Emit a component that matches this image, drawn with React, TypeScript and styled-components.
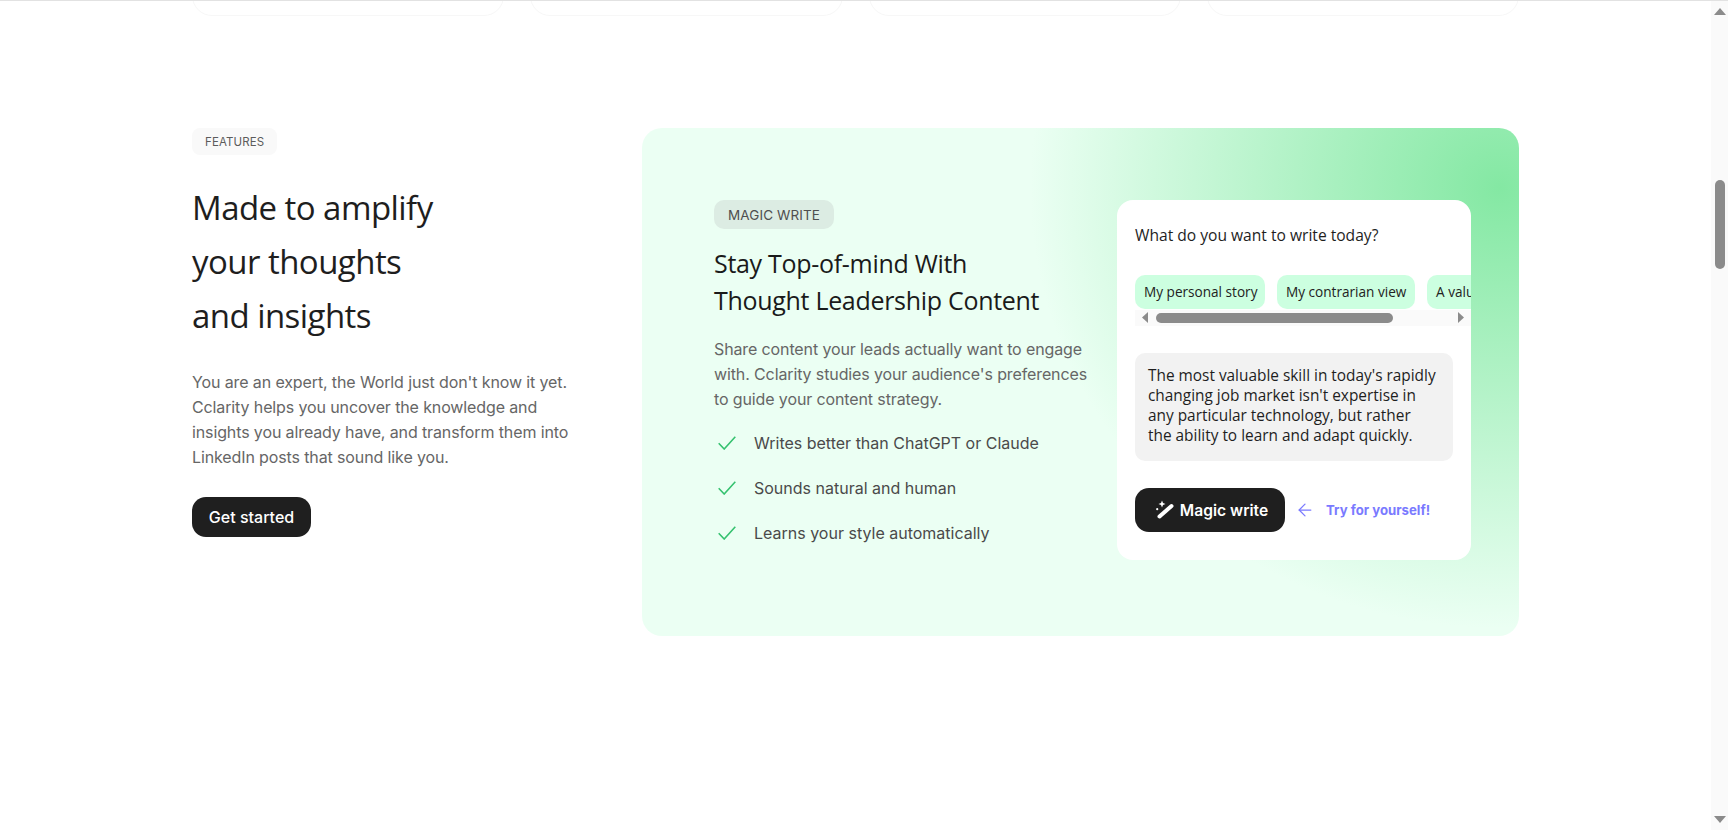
import React from "react";
import styled, { createGlobalStyle } from "styled-components";
import { ArrowLeft } from "lucide-react";

const GlobalStyle = createGlobalStyle`
  html, body {
    margin: 0;
    padding: 0;
    height: 100%;
    overflow: hidden;
    background: #fff;
  }
  * { box-sizing: border-box; }
`;

const Page = styled.div`
  height: 830px;
  display: flex;
  flex-direction: column;
  border-top: 1px solid #e2e2e2;
  font-family: Inter, "Liberation Sans", sans-serif;
`;

const Row = styled.div`
  flex: 1;
  display: flex;
  min-height: 0;
`;

const Main = styled.main`
  flex: 1;
  padding: 0 192px 0 192px;
`;

const StubRow = styled.div`
  display: grid;
  grid-template-columns: repeat(4, 1fr);
  gap: 26px;
  height: 15px;
  overflow: hidden;
`;

// cards of the section above, only their bottom edge is still on screen
const Stub = styled.div`
  height: 40px;
  margin-top: -25px;
  border: 1px solid #f7f7f7;
  border-radius: 24px;
`;

const Section = styled.section`
  display: flex;
  margin-top: 112px;
`;

const Intro = styled.div`
  width: 450px;
  flex-shrink: 0;
`;

const Tag = styled.span`
  display: inline-block;
  height: 27px;
  line-height: 28px;
  padding: 0 13px;
  border-radius: 8px;
  background: #f9f9f9;
  color: #5c5c5c;
  font-size: 11.5px;
  letter-spacing: 0.1px;
`;

const Title = styled.h2`
  margin: 26px 0 0;
  font-family: "Open Sans", sans-serif;
  font-size: 33px;
  font-weight: 400;
  line-height: 54px;
  letter-spacing: -0.55px;
  color: #1e1e1e;
`;

const IntroText = styled.p`
  margin: 27px 0 0;
  width: 390px;
  font-size: 16px;
  line-height: 25px;
  letter-spacing: -0.12px;
  color: #666;
`;

const StartButton = styled.button`
  display: block;
  margin-top: 27px;
  width: 119px;
  height: 40px;
  border: none;
  border-radius: 14px;
  background: #1f1f1f;
  color: #fff;
  font-family: inherit;
  font-size: 16px;
  font-weight: 500;
`;

const FeatureCard = styled.div`
  flex: 1;
  height: 508px;
  display: flex;
  padding: 72px 48px 0 72px;
  border-radius: 20px;
  background: radial-gradient(ellipse 470px 440px at 858px 60px, #84e8a3 0%, #ebfff3 100%);
`;

const FeatureCopy = styled.div`
  width: 403px;
  flex-shrink: 0;
`;

const FeatureTag = styled.span`
  display: inline-block;
  height: 29px;
  line-height: 30px;
  padding: 0 14px;
  border-radius: 10px;
  background: #dcece3;
  color: #4f4f4f;
  font-size: 13.5px;
  letter-spacing: 0.1px;
`;

const FeatureTitle = styled.h3`
  margin: 16px 0 0;
  font-family: "Open Sans", sans-serif;
  font-size: 25px;
  font-weight: 400;
  line-height: 36.5px;
  letter-spacing: -0.3px;
  color: #1a1a1a;
`;

const FeatureText = styled.p`
  margin: 19px 0 0;
  width: 385px;
  font-size: 16px;
  line-height: 25px;
  letter-spacing: -0.12px;
  color: #666;
`;

const Checks = styled.ul`
  list-style: none;
  margin: 18px 0 0;
  padding: 0;
  display: flex;
  flex-direction: column;
  gap: 20px;
`;

const CheckItem = styled.li`
  display: flex;
  align-items: center;
  gap: 18px;
  height: 25px;
  padding-left: 4px;
  font-size: 16px;
  color: #4a4a4a;
`;

const Panel = styled.div`
  width: 354px;
  height: 360px;
  padding: 23px 0 0 18px;
  border-radius: 16px;
  background: #fff;
`;

const PanelTitle = styled.div`
  font-family: "Open Sans", sans-serif;
  font-size: 15.6px;
  line-height: 24px;
  color: #1e1e1e;
`;

const ChipScroller = styled.div`
  margin-top: 27.5px;
  overflow: hidden;
`;

const Chips = styled.div`
  display: flex;
  gap: 12px;
  width: max-content;
`;

const Chip = styled.span<{ $w: number }>`
  width: ${(p) => p.$w}px;
  height: 34px;
  line-height: 33px;
  padding-left: 9px;
  border-radius: 10px;
  background: #ccffe0;
  color: #222;
  font-family: "Open Sans", sans-serif;
  font-size: 13.6px;
  white-space: nowrap;
`;

const MiniRail = styled.div`
  height: 16px;
  margin-top: 1px;
  display: flex;
  align-items: center;
  justify-content: space-between;
  padding: 0 7px 0 7px;
  background: #fafafa;
`;

const MiniThumb = styled.div`
  width: 237px;
  height: 10px;
  margin-right: 58px;
  border-radius: 5px;
  background: #8b8b8b;
`;

const Draft = styled.div`
  width: 318px;
  height: 108px;
  margin-top: 27.5px;
  padding: 12.5px 0 0 13px;
  border-radius: 10px;
  background: #f2f2f2;
  font-family: "Open Sans", sans-serif;
  font-size: 15.4px;
  line-height: 20.3px;
  white-space: nowrap;
  color: #1e1e1e;
`;

const Actions = styled.div`
  display: flex;
  align-items: center;
  margin-top: 27px;
`;

const MagicButton = styled.button`
  display: flex;
  align-items: center;
  justify-content: center;
  gap: 5px;
  width: 150px;
  height: 44px;
  padding: 0 0 0 3px;
  border: none;
  border-radius: 14px;
  background: #1f1f1f;
  color: #fff;
  font-family: inherit;
  font-size: 15.6px;
  font-weight: 600;
`;

const TryHint = styled.div`
  display: flex;
  align-items: center;
  gap: 11px;
  margin-left: 10px;
  color: #7a7aff;
  font-size: 13.2px;
  font-weight: 700;
`;

const ScrollRail = styled.aside`
  width: 17px;
  flex-shrink: 0;
  display: flex;
  flex-direction: column;
  align-items: center;
  padding-top: 7px;
  background: #fafafa;
`;

const RailThumb = styled.div`
  width: 10px;
  height: 89px;
  margin-top: 165px;
  border-radius: 5px;
  background: #8b8b8b;
`;

const RailEnd = styled.div`
  margin-top: auto;
  margin-bottom: 7px;
  display: flex;
`;

const Triangle: React.FC<{ dir: "up" | "down" | "left" | "right"; w: number; h: number }> = ({ dir, w, h }) => {
  const points = {
    up: `0,${h} ${w},${h} ${w / 2},0`,
    down: `0,0 ${w},0 ${w / 2},${h}`,
    left: `${w},0 ${w},${h} 0,${h / 2}`,
    right: `0,0 0,${h} ${w},${h / 2}`,
  }[dir];
  return (
    <svg width={w} height={h} viewBox={`0 0 ${w} ${h}`}>
      <polygon points={points} fill="#8b8b8b" />
    </svg>
  );
};

const CheckMark = () => (
  <svg width="18" height="14" viewBox="0 0 18 14" fill="none">
    <path d="M0.7 7.2 L6.2 13 L17.3 0.8" stroke="#35c26f" strokeWidth="1.6" />
  </svg>
);

const WandIcon = () => (
  <svg width="20" height="20" viewBox="0 0 20 20" fill="#fff">
    <path d="M4.5 16.5 L16.5 6" stroke="#fff" strokeWidth="4" strokeLinecap="round" />
    <path d="M7 0.5 L8 3 L10.5 4 L8 5 L7 7.5 L6 5 L3.5 4 L6 3 Z" />
    <circle cx="2.2" cy="9.2" r="1.1" />
  </svg>
);

const checks = ["Writes better than ChatGPT or Claude", "Sounds natural and human", "Learns your style automatically"];

const App: React.FC = () => {
  return (
    <Page>
      <GlobalStyle />
      <Row>
        <Main>
          <StubRow>
            <Stub />
            <Stub />
            <Stub />
            <Stub />
          </StubRow>
          <Section>
            <Intro>
              <Tag>FEATURES</Tag>
              <Title>
                Made to amplify
                <br />
                your thoughts
                <br />
                and insights
              </Title>
              <IntroText>
                You are an expert, the World just don't know it yet. Cclarity helps you uncover the knowledge and
                insights you already have, and transform them into LinkedIn posts that sound like you.
              </IntroText>
              <StartButton>Get started</StartButton>
            </Intro>
            <FeatureCard>
              <FeatureCopy>
                <FeatureTag>MAGIC WRITE</FeatureTag>
                <FeatureTitle>
                  Stay Top-of-mind With
                  <br />
                  Thought Leadership Content
                </FeatureTitle>
                <FeatureText>
                  Share content your leads actually want to engage with. Cclarity studies your audience's preferences
                  to guide your content strategy.
                </FeatureText>
                <Checks>
                  {checks.map((c) => (
                    <CheckItem key={c}>
                      <CheckMark />
                      {c}
                    </CheckItem>
                  ))}
                </Checks>
              </FeatureCopy>
              <Panel>
                <PanelTitle>What do you want to write today?</PanelTitle>
                <ChipScroller>
                  <Chips>
                    <Chip $w={130}>My personal story</Chip>
                    <Chip $w={138}>My contrarian view</Chip>
                    <Chip $w={130}>A valuable lesson</Chip>
                  </Chips>
                </ChipScroller>
                <MiniRail>
                  <Triangle dir="left" w={6} h={11} />
                  <MiniThumb />
                  <Triangle dir="right" w={6} h={11} />
                </MiniRail>
                <Draft>
                  The most valuable skill in today's rapidly
                  <br />
                  changing job market isn't expertise in
                  <br />
                  any particular technology, but rather
                  <br />
                  the ability to learn and adapt quickly.
                </Draft>
                <Actions>
                  <MagicButton>
                    <WandIcon />
                    Magic write
                  </MagicButton>
                  <TryHint>
                    <ArrowLeft size={20} strokeWidth={1.5} />
                    Try for yourself!
                  </TryHint>
                </Actions>
              </Panel>
            </FeatureCard>
          </Section>
        </Main>
        <ScrollRail>
          <Triangle dir="up" w={12} h={7} />
          <RailThumb />
          <RailEnd>
            <Triangle dir="down" w={12} h={7} />
          </RailEnd>
        </ScrollRail>
      </Row>
    </Page>
  );
};

export default App;
